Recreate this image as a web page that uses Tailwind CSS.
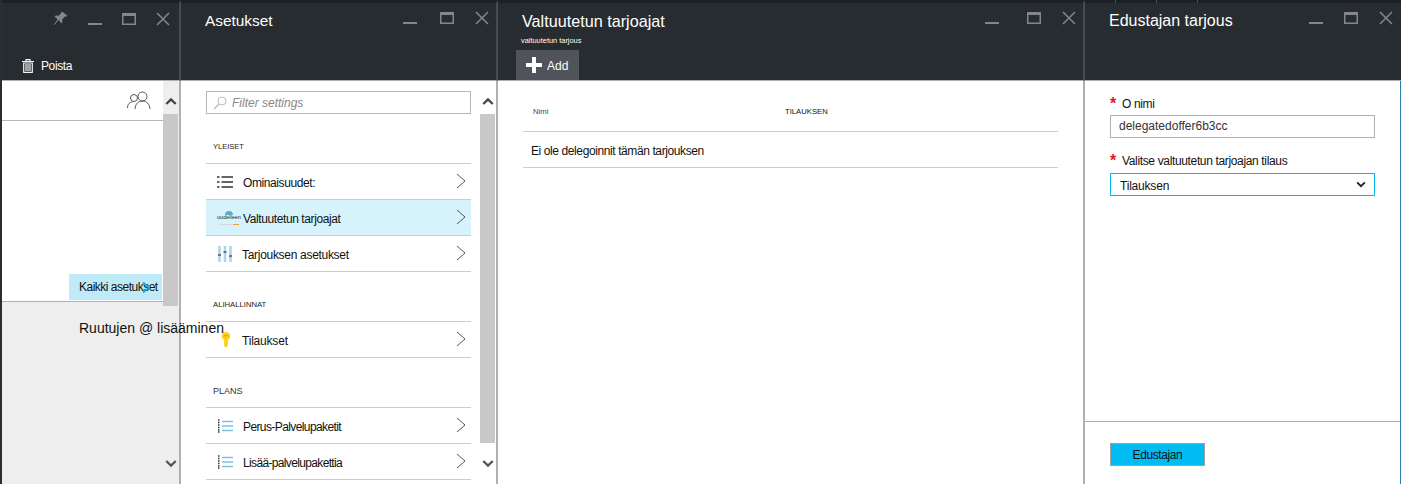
<!DOCTYPE html>
<html lang="fi">
<head>
<meta charset="UTF-8">
<title>Edustajan tarjous</title>
<script src="https://cdn.jsdelivr.net/npm/@tailwindcss/browser@4"></script>
</head>
<body class="bg-white font-['Liberation_Sans',Arial,sans-serif] text-[#111] overflow-hidden">
<svg class="hidden">
  <symbol id="min" viewBox="0 0 14 14"><path d="M0 12h14" stroke="currentColor" stroke-width="2"/></symbol>
  <symbol id="max" viewBox="0 0 14 14"><path d="M0 1h14v12H0z M1.500 4h11v7.500h-11z" fill="currentColor" fill-rule="evenodd"/></symbol>
  <symbol id="close" viewBox="0 0 14 14"><path d="M1 1l12 12M13 1L1 13" stroke="currentColor" stroke-width="1.500" fill="none"/></symbol>
  <symbol id="chev" viewBox="0 0 12 18"><path d="M2 2l8 7-8 7" stroke="#555" stroke-width="1" fill="none"/></symbol>
  <symbol id="up" viewBox="0 0 14 10"><path d="M1.500 8L7 2.500 12.500 8" stroke="#444" stroke-width="2.600" fill="none"/></symbol>
  <symbol id="down" viewBox="0 0 14 10"><path d="M1.500 2L7 7.500 12.500 2" stroke="#555" stroke-width="2.600" fill="none"/></symbol>
  <symbol id="numlist" viewBox="0 0 16 14"><path d="M1 1h1.500M1 3.500h1.500M1 6h1.500M1 8.500h1.500M1 11h1.500M1 13h1.500" stroke="#333" stroke-width="1.300"/><path d="M5 2.500h11M5 7h11M5 11.500h11" stroke="#7cc0e4" stroke-width="1.300"/></symbol>
</svg>

<div class="flex h-[484px] w-[1401px]">
  <!-- blade 1 -->
  <section class="w-[181px] h-full shrink-0 flex flex-col border-l-2 border-l-[#2a2e33]">
    <header class="h-[81px] shrink-0 bg-[#272c30] border-t-[3px] border-[#1d2024] border-b border-b-[#b0b0b0] border-r-2 border-r-[#484c51] relative">
      <div class="flex items-center text-[#83868a] absolute left-[51px] top-[8px] gap-[20px]">
        <svg class="w-[15px] h-[15px]" viewBox="0 0 14 14"><path d="M8.500 0.500l5 4-1 .8-1-.4-3 3 .3 2.600-1 1-2.600-3-4 4.500-.5-.5 3.600-4.600-2.800-2.800 1-1 2.600.4 3-3-.2-1z" fill="currentColor"/></svg>
        <svg class="w-[14px] h-[14px]"><use href="#min"/></svg>
        <svg class="w-[14px] h-[14px]"><use href="#max"/></svg>
        <svg class="w-[14px] h-[14px]"><use href="#close"/></svg>
      </div>
      <div class="absolute left-[20px] top-[54px] flex items-center gap-[7px] text-white text-[12px] tracking-[-0.4px]">
        <svg class="w-[12px] h-[14px]" viewBox="0 0 12 14"><path d="M0 2.500h12M4 2.500V.7h4v1.800M1.700 4h8.600v9.300H1.700zM4 5v7M6 5v7M8 5v7" stroke="#f2f2f2" stroke-width="1.200" fill="none"/></svg>
        <span>Poista</span>
      </div>
    </header>
    <div class="flex-1 flex min-h-0 border-r-2 border-[#b0b0b0]">
      <div class="w-[161px] flex flex-col">
        <div class="h-[40px] border-b border-[#b8b8b8] flex justify-end items-center pr-[12px]">
          <svg class="w-[24px] h-[20px]" viewBox="0 0 24 20"><g fill="none" stroke="#555" stroke-width="1"><circle cx="7" cy="7" r="3.500"/><circle cx="15.500" cy="5.500" r="4.500"/><path d="M.5 17c0-4 2.500-6 5-6M8 18c.5-5 3-8 7.500-8s7 3 7.500 8"/></g></svg>
        </div>
        <div class="h-[181px] border-b border-[#b0b0b0] flex items-end justify-end pb-[1px] pr-[1px]">
          <div class="w-[93px] h-[26px] bg-[#bfeaf8] text-[12px] tracking-[-0.5px] leading-[26px] pl-[10px] whitespace-nowrap relative">Kaikki asetukset<svg class="absolute left-[73px] top-[8px] w-[8px] h-[11px]" viewBox="0 0 8 11"><path d="M1 .5L7 5.500 1 10.500" stroke="#1fa8e0" stroke-width="2" fill="none"/></svg></div>
        </div>
        <div class="flex-1 bg-[#eeeeee] pl-[77px] pt-[16px] text-[14px] leading-[20px] whitespace-nowrap relative z-10">Ruutujen @ lisääminen</div>
      </div>
      <div class="w-[16px] bg-[#eeeeee] flex flex-col items-start">
        <svg class="w-[12px] h-[9px] mt-[16px] mb-[8px] ml-[2px]"><use href="#up"/></svg>
        <div class="w-[15px] h-[192px] bg-[#c8c8c8]"></div>
        <svg class="w-[12px] h-[9px] mt-[153px] ml-[2px]"><use href="#down"/></svg>
      </div>
    </div>
  </section>

  <!-- blade 2 -->
  <section class="w-[317px] h-full shrink-0 flex flex-col">
    <header class="h-[81px] shrink-0 bg-[#272c30] border-t-[3px] border-[#1d2024] border-b border-b-[#b0b0b0] border-r-2 border-r-[#484c51] relative">
      <h1 class="absolute left-[24px] top-[8px] text-[15.400px] leading-[20px] text-white">Asetukset</h1>
      <div class="flex text-[#83868a] absolute left-[222px] top-[8px] gap-[21px]">
        <svg class="w-[14px] h-[14px]"><use href="#min"/></svg>
        <svg class="w-[14px] h-[14px] ml-[2px]"><use href="#max"/></svg>
        <svg class="w-[14px] h-[14px]"><use href="#close"/></svg>
      </div>
    </header>
    <div class="flex-1 flex min-h-0 border-r-2 border-[#b0b0b0]">
      <div class="w-[299px] pl-[25px] pr-[9px] pt-[10px]">
        <div class="h-[23px] border border-[#b8b8b8] flex items-center pl-[6px] gap-[5px] text-[12px] italic text-[#888]">
          <svg class="w-[14px] h-[14px]" viewBox="0 0 14 14"><circle cx="9" cy="5" r="4" fill="none" stroke="#bbb"/><path d="M6 8l-5 5" stroke="#bbb" stroke-width="1.500"/></svg>
          <span>Filter settings</span>
        </div>
        <div class="h-[49px] flex items-end pb-[11px] pl-[7px] text-[7.500px] leading-[10px] text-[#222]">YLEISET</div>
        <div class="border-t border-[#cccccc] h-[36px] flex items-center text-[12px] tracking-[-0.4px] relative">
          <svg class="w-[16px] h-[14px] ml-[11px] mr-[10px]" viewBox="0 0 16 14"><path d="M0 2h2.500M4.500 2H16M0 7h2.500M4.500 7H16M0 12h2.500M4.500 12H16" stroke="#333" stroke-width="1.700"/></svg>
          <span class="pt-[3px]">Ominaisuudet:</span>
          <svg class="w-[12px] h-[18px] absolute right-[4px] top-[8px]"><use href="#chev"/></svg>
        </div>
        <div class="border-t border-[#cccccc] bg-[#d6f3fc] h-[36px] flex items-center text-[12px] tracking-[-0.4px] relative">
          <div class="w-[24px] ml-[11px] mr-[2px] shrink-0 flex flex-col items-center text-[5.500px] leading-[5px] tracking-normal">
            <span class="w-[8px] h-[4px] rounded-t-full bg-[#5fa8cf]"></span>
            <span class="text-[#222]">uudelleen</span>
            <span class="w-[20px] h-[1px] mt-[4px] bg-[linear-gradient(90deg,#d9d9d9_70%,#f0a040_70%)]"></span>
          </div>
          <span class="pt-[3px]">Valtuutetun tarjoajat</span>
          <svg class="w-[12px] h-[18px] absolute right-[4px] top-[8px]"><use href="#chev"/></svg>
        </div>
        <div class="border-y border-[#cccccc] h-[37px] flex items-center text-[12px] tracking-[-0.3px] relative">
          <svg class="w-[16px] h-[18px] ml-[11px] mr-[9px]" viewBox="0 0 16 18"><path d="M2.500 1v16M8 1v16M13.500 1v16" stroke="#a9d5ea" stroke-width="2.500"/><path d="M1 10h3M6.500 7h3M12 11h3" stroke="#555" stroke-width="1.500"/></svg>
          <span class="pt-[3px]">Tarjouksen asetukset</span>
          <svg class="w-[12px] h-[18px] absolute right-[4px] top-[8px]"><use href="#chev"/></svg>
        </div>
        <div class="h-[49px] flex items-end pb-[11px] pl-[7px] text-[7.700px] leading-[10px] text-[#222]">ALIHALLINNAT</div>
        <div class="border-y border-[#cccccc] h-[37px] flex items-center text-[12px] tracking-[-0.2px] relative">
          <svg class="w-[10px] h-[16px] ml-[15px] mr-[11px]" viewBox="0 0 10 17"><path d="M5 0a4.500 4.500 0 0 1 2 8.500V14l-2 3-2-2V8.500A4.500 4.500 0 0 1 5 0z" fill="#fcd116"/><path d="M3 4h4" stroke="#c99a00"/></svg>
          <span class="pt-[3px]">Tilaukset</span>
          <svg class="w-[12px] h-[18px] absolute right-[4px] top-[8px]"><use href="#chev"/></svg>
        </div>
        <div class="h-[49px] flex items-end pb-[11px] pl-[7px] text-[9px] leading-[10px] text-[#333]">PLANS</div>
        <div class="border-t border-[#cccccc] h-[36px] flex items-center text-[12px] tracking-[-0.6px] relative">
          <svg class="w-[16px] h-[14px] ml-[11px] mr-[10px]"><use href="#numlist"/></svg>
          <span class="pt-[3px]">Perus-Palvelupaketit</span>
          <svg class="w-[12px] h-[18px] absolute right-[4px] top-[8px]"><use href="#chev"/></svg>
        </div>
        <div class="border-y border-[#cccccc] h-[37px] flex items-center text-[12px] tracking-[-0.65px] relative">
          <svg class="w-[16px] h-[14px] ml-[11px] mr-[10px]"><use href="#numlist"/></svg>
          <span class="pt-[3px]">Lisää-palvelupakettia</span>
          <svg class="w-[12px] h-[18px] absolute right-[4px] top-[8px]"><use href="#chev"/></svg>
        </div>
      </div>
      <div class="w-[16px] flex flex-col items-start">
        <svg class="w-[12px] h-[9px] mt-[16px] mb-[8px] ml-[2px]"><use href="#up"/></svg>
        <div class="w-[15px] h-[329px] bg-[#c8c8c8]"></div>
        <svg class="w-[12px] h-[9px] mt-[16px] ml-[2px]"><use href="#down"/></svg>
      </div>
    </div>
  </section>

  <!-- blade 3 -->
  <section class="w-[587px] h-full shrink-0 flex flex-col">
    <header class="h-[81px] shrink-0 bg-[#272c30] border-t-[3px] border-[#1d2024] border-b border-b-[#b0b0b0] border-r-2 border-r-[#484c51] relative">
      <h1 class="absolute left-[24px] top-[8px] text-[16.200px] leading-[20px] text-white">Valtuutetun tarjoajat</h1>
      <p class="absolute left-[23px] top-[33px] text-[7.400px] leading-[9px] text-white">valtuutetun tarjous</p>
      <div class="flex text-[#83868a] absolute left-[487px] top-[8px] gap-[21px]">
        <svg class="w-[14px] h-[14px]"><use href="#min"/></svg>
        <svg class="w-[14px] h-[14px] ml-[7px]"><use href="#max"/></svg>
        <svg class="w-[14px] h-[14px]"><use href="#close"/></svg>
      </div>
      <button class="absolute left-[18px] top-[47px] w-[63px] h-[30px] bg-[#50545a] flex items-center pl-[10px] gap-[5px] text-white text-[12px]">
        <svg class="w-[16px] h-[16px]" viewBox="0 0 16 16"><path d="M8 0v16M0 8h16" stroke="#fff" stroke-width="4"/></svg>
        <span class="pt-[2px]">Add</span>
      </button>
    </header>
    <div class="flex-1 pl-[25px] pr-[25px] border-r-2 border-[#b0b0b0]">
      <div class="h-[51px] border-b border-[#cccccc] flex text-[7.700px] leading-[10px] pt-[26px]">
        <span class="w-[262px] pl-[10px] text-[#2b4a60]">Nimi</span>
        <span>TILAUKSEN</span>
      </div>
      <div class="h-[36px] border-b border-[#cccccc] flex items-center pl-[8px] pt-[3px] text-[12px] tracking-[-0.4px]">Ei ole delegoinnit tämän tarjouksen</div>
    </div>
  </section>

  <!-- blade 4 -->
  <section class="flex-1 h-full flex flex-col">
    <header class="h-[81px] shrink-0 bg-[#272c30] border-t-[3px] border-[#1d2024] border-b border-b-[#b0b0b0] relative">
      <div class="absolute left-[30px] -top-[3px] h-[3px] flex gap-[40px]">
        <span class="w-[1px] bg-[#4a4e53]"></span>
        <span class="w-[1px] bg-[#4a4e53]"></span>
        <span class="w-[1px] bg-[#4a4e53]"></span>
      </div>
      <h1 class="absolute left-[24px] top-[8px] text-[16px] leading-[20px] text-white">Edustajan tarjous</h1>
      <div class="flex text-[#83868a] absolute left-[224px] top-[8px] gap-[21px]">
        <svg class="w-[14px] h-[14px]"><use href="#min"/></svg>
        <svg class="w-[14px] h-[14px]"><use href="#max"/></svg>
        <svg class="w-[14px] h-[14px]"><use href="#close"/></svg>
      </div>
    </header>
    <div class="flex-1 flex flex-col border-r border-[#2a7fa8]">
      <div class="h-[341px] px-[25px] pt-[15px] border-b border-[#b0b0b0] text-[12px] tracking-[-0.35px]">
        <label class="block leading-[16px]"><span class="text-[#e81123] inline-block w-[12px] text-[16px] font-bold align-top">*</span>O nimi</label>
        <div class="w-[265px] h-[23px] mt-[3px] border border-[#b0b0b0] text-[12px] tracking-normal leading-[21px] pl-[8px] text-[#333]">delegatedoffer6b3cc</div>
        <label class="block leading-[16px] mt-[15px]"><span class="text-[#e81123] inline-block w-[12px] text-[16px] font-bold align-top">*</span>Valitse valtuutetun tarjoajan tilaus</label>
        <div class="w-[265px] h-[23px] mt-[4px] border border-[#00bcf2] text-[12px] tracking-[-0.2px] pl-[9px] flex justify-between items-center pr-[8px]">
          <span class="pt-[3px]">Tilauksen</span>
          <svg class="w-[10px] h-[7px]" viewBox="0 0 14 10"><path d="M1.500 2L7 7.500 12.500 2" stroke="#222" stroke-width="2.600" fill="none"/></svg>
        </div>
      </div>
      <div class="px-[25px] pt-[20px]">
        <button class="w-[95px] h-[23px] bg-[#00bcf2] border border-[#a0a0a0] text-[12px] tracking-[-0.4px] pt-[2px] text-[#111]">Edustajan</button>
      </div>
    </div>
  </section>
</div>
</body>
</html>
